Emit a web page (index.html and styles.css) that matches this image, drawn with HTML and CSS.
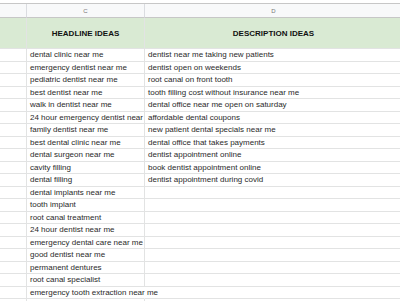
FILE: index.html
```html
<!DOCTYPE html>
<html>
<head>
<meta charset="utf-8">
<link rel="stylesheet" href="styles.css">
</head>
<body>
<div class="sheet">
  <div class="row colhead">
    <div class="cell"></div>
    <div class="cell">C</div>
    <div class="cell">D</div>
  </div>
  <div class="row title">
    <div class="cell"></div>
    <div class="cell">HEADLINE IDEAS</div>
    <div class="cell">DESCRIPTION IDEAS</div>
  </div>
  <div class="row data"><div class="cell"></div><div class="cell">dental clinic near me</div><div class="cell">dentist near me taking new patients</div></div>
  <div class="row data"><div class="cell"></div><div class="cell">emergency dentist near me</div><div class="cell">dentist open on weekends</div></div>
  <div class="row data"><div class="cell"></div><div class="cell">pediatric dentist near me</div><div class="cell">root canal on front tooth</div></div>
  <div class="row data"><div class="cell"></div><div class="cell">best dentist near me</div><div class="cell">tooth filling cost without insurance near me</div></div>
  <div class="row data"><div class="cell"></div><div class="cell">walk in dentist near me</div><div class="cell">dental office near me open on saturday</div></div>
  <div class="row data"><div class="cell"></div><div class="cell">24 hour emergency dentist near</div><div class="cell">affordable dental coupons</div></div>
  <div class="row data"><div class="cell"></div><div class="cell">family dentist near me</div><div class="cell">new patient dental specials near me</div></div>
  <div class="row data"><div class="cell"></div><div class="cell">best dental clinic near me</div><div class="cell">dental office that takes payments</div></div>
  <div class="row data"><div class="cell"></div><div class="cell">dental surgeon near me</div><div class="cell">dentist appointment online</div></div>
  <div class="row data"><div class="cell"></div><div class="cell">cavity filling</div><div class="cell">book dentist appointment online</div></div>
  <div class="row data"><div class="cell"></div><div class="cell">dental filling</div><div class="cell">dentist appointment during covid</div></div>
  <div class="row data"><div class="cell"></div><div class="cell">dental implants near me</div><div class="cell"></div></div>
  <div class="row data"><div class="cell"></div><div class="cell">tooth implant</div><div class="cell"></div></div>
  <div class="row data"><div class="cell"></div><div class="cell">root canal treatment</div><div class="cell"></div></div>
  <div class="row data"><div class="cell"></div><div class="cell">24 hour dentist near me</div><div class="cell"></div></div>
  <div class="row data"><div class="cell"></div><div class="cell">emergency dental care near me</div><div class="cell"></div></div>
  <div class="row data"><div class="cell"></div><div class="cell">good dentist near me</div><div class="cell"></div></div>
  <div class="row data"><div class="cell"></div><div class="cell">permanent dentures</div><div class="cell"></div></div>
  <div class="row data"><div class="cell"></div><div class="cell">root canal specialist</div><div class="cell"></div></div>
  <div class="row data"><div class="cell"></div><div class="cell spill">emergency tooth extraction near me</div><div class="cell"></div></div>
  <div class="row data"><div class="cell"></div><div class="cell"></div><div class="cell"></div></div>
</div>
</body>
</html>
```

FILE: styles.css
```css
html, body {
  margin: 0;
  padding: 0;
  background: #ffffff;
  overflow: hidden;
}
body {
  font-family: "Liberation Sans", Arial, sans-serif;
  color: #2a2a2a;
}
.sheet {
  padding-top: 3px;
  width: 403px;
}
.row {
  display: grid;
  grid-template-columns: 27px 118px 258px;
}
.cell {
  box-sizing: border-box;
  border-right: 1px solid #e2e3e3;
  border-bottom: 1px solid #e2e3e3;
  white-space: nowrap;
  overflow: hidden;
}
.colhead {
  height: 15px;
  background: #f8f9fa;
  border-top: 1px solid #c7c7c7;
  box-sizing: border-box;
}
.colhead .cell {
  border-bottom-color: #c7c7c7;
  border-right-color: #dadce0;
  font-size: 6px;
  color: #777;
  text-align: center;
  line-height: 14px;
}
.title {
  height: 31px;
  background: #d9ead3;
}
.title .cell {
  display: flex;
  align-items: center;
  justify-content: center;
  font-size: 8px;
  font-weight: bold;
  color: #111;
}
.data {
  height: 12.5px;
}
.data .cell {
  display: flex;
  align-items: center;
  padding: 0 3px;
  font-size: 8px;
}
.data .spill {
  overflow: visible;
  border-right-color: transparent;
}
```
